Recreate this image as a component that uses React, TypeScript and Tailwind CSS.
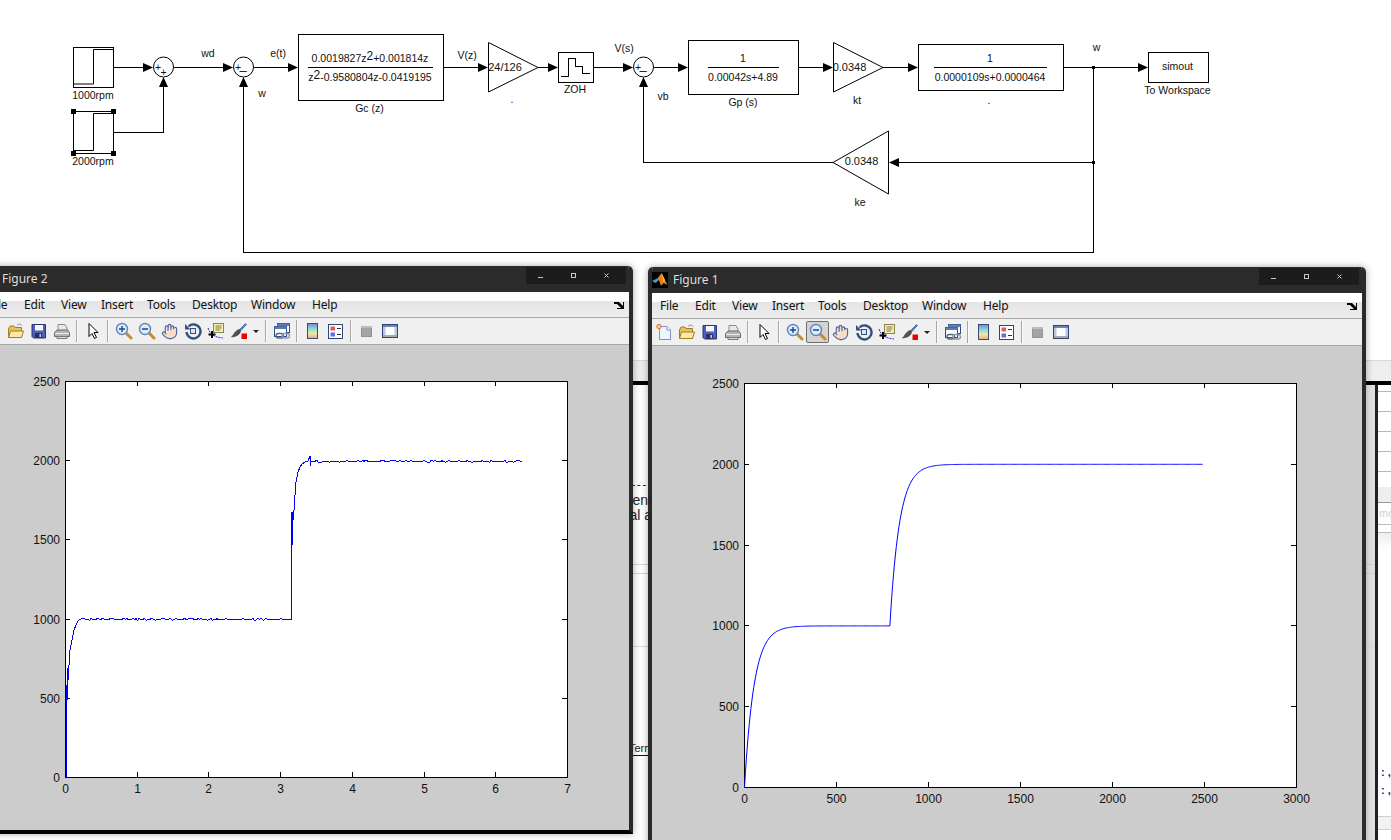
import type { ReactNode } from 'react'
import { Hand } from 'lucide-react'

// ---------- simulink diagram ----------

function ArrowR({ x, y }: { x: number; y: number }) {
  return <polygon points={`${x - 10},${y - 4.5} ${x},${y} ${x - 10},${y + 4.5}`} fill="#000" />
}

function ArrowU({ x, y }: { x: number; y: number }) {
  return <polygon points={`${x - 4.5},${y + 10} ${x},${y} ${x + 4.5},${y + 10}`} fill="#000" />
}

function Label({ x, y, children, size = 10.5 }: { x: number; y: number; children: ReactNode; size?: number }) {
  return (
    <text x={x} y={y} textAnchor="middle" fontSize={size} fill="#111">
      {children}
    </text>
  )
}

function Sum({ x, a, b }: { x: number; a: string; b: string }) {
  return (
    <g>
      <circle cx={x} cy={67} r={10} fill="#fff" stroke="#000" />
      <text x={x - 5.5} y={71} textAnchor="middle" fontSize={10.5} fill="#111">{a}</text>
      <text x={x + (b === '+' ? 0 : -0.5)} y={b === '+' ? 76 : 75} textAnchor="middle" fontSize={b === '+' ? 10.5 : 13} fill="#111">{b}</text>
    </g>
  )
}

function Diagram() {
  const wires = [
    'M113.5 67.5H144',
    'M113.5 132.5H163.5V86',
    'M174 67.5H224',
    'M254 67.5H289',
    'M243.5 86V252.5H1093.5V67',
    'M443.5 67.5H479',
    'M538 67.5H549',
    'M593.5 67.5H624',
    'M654 67.5H679',
    'M643.5 86V162.5H833',
    'M798.5 67.5H824',
    'M883 67.5H909',
    'M1063 67.5H1139',
    'M1093.5 162.5H898',
  ]
  return (
    <svg width={1391} height={266} className="block font-['Liberation_Sans']">
      <g fill="none" stroke="#000">
        {wires.map((d) => (
          <path key={d} d={d} shapeRendering="crispEdges" />
        ))}
        <rect x={73.5} y={47.5} width={40} height={40} shapeRendering="crispEdges" />
        <path d="M74 84H93.5V49.5H113" />
        <rect x={73.5} y={111.5} width={40} height={42} shapeRendering="crispEdges" />
        <path d="M74 150.5H93.5V113.5H113" />
        <rect x={298.5} y={34.5} width={145} height={66} shapeRendering="crispEdges" />
        <path d="M308 67.5H433M708 67.5H779M934 67.5H1047" shapeRendering="crispEdges" />
        <polygon points="488.5,42.5 488.5,92 538,67.5" />
        <rect x={558.5} y={52.5} width={35} height={30} shapeRendering="crispEdges" />
        <path d="M561 76.5H568.5V58.5H575.5V66.5H582.5V73.5H590" shapeRendering="crispEdges" />
        <rect x={688.5} y={40.5} width={110} height={54} shapeRendering="crispEdges" />
        <polygon points="833.5,42.5 833.5,92 883,67.5" />
        <rect x={918.5} y={44.5} width={145} height={46} shapeRendering="crispEdges" />
        <rect x={1148.5} y={52.5} width={60} height={30} shapeRendering="crispEdges" />
        <polygon points="888.5,131 888.5,194 833,162.5" />
      </g>

      {/* selection handles on the second step block */}
      <g fill="#000">
        <rect x={71} y={109} width={5} height={5} />
        <rect x={111} y={109} width={5} height={5} />
        <rect x={71} y={151} width={5} height={5} />
        <rect x={111} y={151} width={5} height={5} />
        <rect x={1092} y={66} width={3} height={3} />
        <rect x={1092} y={161} width={3} height={3} />
      </g>

      <ArrowR x={153} y={67.5} />
      <ArrowU x={163.5} y={77} />
      <ArrowR x={233} y={67.5} />
      <ArrowU x={243.5} y={77} />
      <ArrowR x={298} y={67.5} />
      <ArrowR x={488} y={67.5} />
      <ArrowR x={558} y={67.5} />
      <ArrowR x={633} y={67.5} />
      <ArrowU x={643.5} y={77} />
      <ArrowR x={688} y={67.5} />
      <ArrowR x={833} y={67.5} />
      <ArrowR x={918} y={67.5} />
      <ArrowR x={1148} y={67.5} />
      <polygon points="899,158 889,162.5 899,167" fill="#000" />

      <Sum x={163.5} a="+" b="+" />
      <Sum x={243.5} a="+" b="–" />
      <Sum x={643.5} a="+" b="–" />

      <Label x={93} y={99}>1000rpm</Label>
      <Label x={93} y={165}>2000rpm</Label>
      <Label x={208} y={57}>wd</Label>
      <Label x={278} y={57}>e(t)</Label>
      <Label x={262} y={97}>w</Label>
      <Label x={370} y={62}>
        0.0019827z<tspan fontSize={12} dy={-2}>2</tspan><tspan dy={2}>+0.001814z</tspan>
      </Label>
      <Label x={370} y={81}>
        z<tspan fontSize={12} dy={-2}>2</tspan><tspan dy={2}>-0.9580804z-0.0419195</tspan>
      </Label>
      <Label x={369.5} y={112}>Gc (z)</Label>
      <Label x={467} y={59}>V(z)</Label>
      <Label x={505} y={71} size={11}>24/126</Label>
      <Label x={512} y={103}>.</Label>
      <Label x={575} y={93}>ZOH</Label>
      <Label x={624} y={52}>V(s)</Label>
      <Label x={663} y={100}>vb</Label>
      <Label x={743} y={62}>1</Label>
      <Label x={743} y={81}>0.00042s+4.89</Label>
      <Label x={743} y={106}>Gp (s)</Label>
      <Label x={849.5} y={71} size={11}>0.0348</Label>
      <Label x={857} y={104}>kt</Label>
      <Label x={990} y={62}>1</Label>
      <Label x={990} y={81}>0.0000109s+0.0000464</Label>
      <Label x={989} y={104}>.</Label>
      <Label x={1096.5} y={51}>w</Label>
      <Label x={1177.5} y={70}>simout</Label>
      <Label x={1177.5} y={94}>To Workspace</Label>
      <Label x={861.5} y={165} size={11}>0.0348</Label>
      <Label x={860} y={206}>ke</Label>
    </svg>
  )
}

// ---------- toolbar icons ----------

function Ico({ children }: { children: ReactNode }) {
  return (
    <svg width={18} height={18} viewBox="0 0 18 18" className="block">
      {children}
    </svg>
  )
}

const NewIcon = () => (
  <Ico>
    <path d="M4.5 3.5H12L15.5 7V16.5H4.5Z" fill="#eef6fd" stroke="#7c93c4" />
    <path d="M12 3.5V7H15.5" fill="#fff" stroke="#7c93c4" />
    <circle cx={4} cy={3.5} r={2.2} fill="#fbc89a" stroke="#e0703a" />
  </Ico>
)
const OpenIcon = () => (
  <Ico>
    <path d="M10 3.5C12 1.5 14 2 15 3.5" fill="none" stroke="#7a8ea8" />
    <path d="M1.5 7V15.5H14.5V5.5H8L7 4H3Z" fill="#e8c25c" stroke="#a07c28" />
    <path d="M1.5 15.5L3.5 9H16.5L14.5 15.5Z" fill="#fbe9a4" stroke="#a07c28" />
  </Ico>
)
const SaveIcon = () => (
  <Ico>
    <path d="M2 2.5H15.5V16H3.5L2 14.5Z" fill="#4f5fb8" stroke="#2a3478" />
    <rect x={5} y={3} width={8} height={5.5} fill="#f4f6fb" />
    <rect x={5} y={11} width={7} height={5} fill="#2b2f66" />
    <rect x={9.5} y={12} width={1.5} height={3} fill="#c8cde8" />
  </Ico>
)
const PrintIcon = () => (
  <Ico>
    <path d="M5 9V2.5H12L14 6V9Z" fill="#e8e8e8" stroke="#8a8a8a" />
    <path d="M1.5 10.5L4 8H14.5L16.5 10.5V14.5H1.5Z" fill="#b4b4b4" stroke="#6a6a6a" />
    <path d="M4 14.5V16.5H14V14.5Z" fill="#d8d8d8" stroke="#7a7a7a" />
    <path d="M2 11.5H16" stroke="#ececec" />
  </Ico>
)
const PointerIcon = () => (
  <Ico>
    <path d="M5 1.5V14.5L8 11.5L10.5 16.5L12.5 15.5L10 10.5H14Z" fill="#fff" stroke="#000" />
  </Ico>
)
const Lens = ({ plus }: { plus: boolean }) => (
  <Ico>
    <path d="M10.5 10.5L16 16" stroke="#c98a2c" strokeWidth={3} strokeLinecap="round" />
    <circle cx={7} cy={7} r={5.5} fill="#dcecf8" stroke="#5d86bd" strokeWidth={1.4} />
    <path d={plus ? 'M4 7H10M7 4V10' : 'M4 7H10'} stroke="#24408c" strokeWidth={1.4} />
  </Ico>
)
const HandIcon = () => <Hand size={17} fill="#fbdcc2" stroke="#4a68a8" strokeWidth={1.6} className="block" />
const RotateIcon = () => (
  <Ico>
    <path d="M4.5 4.5A7 7 0 1 1 2.5 10" fill="none" stroke="#35507f" strokeWidth={2.4} />
    <path d="M1 2V7.5H6.5Z" fill="#35507f" />
    <rect x={6.5} y={6.5} width={5} height={5} fill="#dfe5f0" stroke="#35507f" />
  </Ico>
)
const CursorIcon = () => (
  <Ico>
    <rect x={6.5} y={1.5} width={10} height={9} fill="#f6eeb0" stroke="#8a8454" />
    <path d="M8.5 4H14.5M8.5 6H14.5M8.5 8H13" stroke="#7a7a50" />
    <path d="M1 6C3 12 6 15 16 16" fill="none" stroke="#1f2fd8" strokeDasharray="2 1" />
    <path d="M5 9V16M1.5 12.5H8.5" stroke="#000" strokeWidth={2} />
  </Ico>
)
const BrushIcon = () => (
  <Ico>
    <path d="M9 8L15.5 1.5L16.5 2.5L10 9.5Z" fill="#5a78c0" stroke="#34508c" strokeWidth={0.6} />
    <path d="M9 7.5L10.5 9.5C9.5 13 6 14.5 1.5 15C4 13 4 9.5 9 7.5Z" fill="#55554f" stroke="#333" strokeWidth={0.6} />
    <rect x={11.5} y={11.5} width={5.5} height={5.5} fill="#ee0000" />
  </Ico>
)
const LinkIcon = () => (
  <Ico>
    <rect x={4.5} y={1.5} width={12} height={9} fill="#fff" stroke="#2f4c80" />
    <rect x={4.5} y={1.5} width={12} height={2.5} fill="#5c7cb4" />
    <rect x={1.5} y={4.5} width={12} height={10} fill="#fff" stroke="#2f4c80" />
    <rect x={1.5} y={4.5} width={12} height={2.5} fill="#5c7cb4" />
    <rect x={3} y={11.5} width={7.5} height={4.5} rx={2.2} fill="none" stroke="#59677e" strokeWidth={1.4} />
    <rect x={9} y={11.5} width={7.5} height={4.5} rx={2.2} fill="none" stroke="#8a98ae" strokeWidth={1.4} />
  </Ico>
)
const ColorbarIcon = ({ id }: { id: string }) => (
  <svg width={18} height={18} viewBox="0 0 18 18" className="block">
    <defs>
      <linearGradient id={id} x1="0" y1="0" x2="0" y2="1">
        <stop offset="0" stopColor="#7e7ee0" />
        <stop offset="0.35" stopColor="#88dcd0" />
        <stop offset="0.65" stopColor="#e8ecaa" />
        <stop offset="1" stopColor="#f0a878" />
      </linearGradient>
    </defs>
    <rect x={3.5} y={1.5} width={10} height={15} fill={`url(#${id})`} stroke="#3a4a78" />
  </svg>
)
const LegendIcon = () => (
  <Ico>
    <rect x={1.5} y={2.5} width={14} height={14} fill="#fff" stroke="#2f4578" />
    <rect x={3.5} y={4.5} width={4.5} height={4} fill="#e05a5a" />
    <rect x={3.5} y={10.5} width={4.5} height={4} fill="#6c6ce0" />
    <path d="M10 6.5H14M10 12.5H14" stroke="#333" />
  </Ico>
)
const HideIcon = () => (
  <Ico>
    <rect x={3.5} y={4.5} width={10} height={10} fill="#a4a4a4" stroke="#929292" />
    <rect x={3} y={4} width={11} height={2} fill="#bcbcbc" />
  </Ico>
)
const ShowIcon = () => (
  <Ico>
    <rect x={1.5} y={2.5} width={15} height={13} fill="#fff" stroke="#2f4578" />
    <rect x={2} y={3} width={14} height={2} fill="#6a86b8" />
    <rect x={2} y={13} width={14} height={2} fill="#a9a9a9" />
    <rect x={2} y={5} width={2.5} height={8} fill="#b8c8e0" />
    <rect x={13.5} y={5} width={2.5} height={8} fill="#b8c8e0" />
  </Ico>
)

function Btn({ children, active }: { children: ReactNode; active?: boolean }) {
  return (
    <div
      className={`flex h-[22px] w-[23px] items-center justify-center rounded-[2px] ${
        active ? 'border border-[#6e6e6e] bg-[#d4d4d4]' : ''
      }`}
    >
      {children}
    </div>
  )
}

function Sep() {
  return (
    <div className="flex w-[8px] justify-center">
      <div className="h-[22px] w-[2px] border-l border-[#a8a8a8] bg-[#fafafa]" />
    </div>
  )
}

function Toolbar({ gradientId, zoomOutActive }: { gradientId: string; zoomOutActive?: boolean }) {
  return (
    <div className="flex h-[28px] shrink-0 items-center border-t border-b border-t-[#a6a6a6] border-b-[#a6a6a6] bg-[#f0f0f0]">
      <Btn><NewIcon /></Btn>
      <Btn><OpenIcon /></Btn>
      <Btn><SaveIcon /></Btn>
      <Btn><PrintIcon /></Btn>
      <Sep />
      <Btn><PointerIcon /></Btn>
      <Sep />
      <Btn><Lens plus /></Btn>
      <Btn active={zoomOutActive}><Lens plus={false} /></Btn>
      <Btn><HandIcon /></Btn>
      <Btn><RotateIcon /></Btn>
      <Btn><CursorIcon /></Btn>
      <Btn><BrushIcon /></Btn>
      <div className="flex w-[12px] justify-center">
        <div className="h-0 w-0 border-x-[3px] border-t-[3px] border-x-transparent border-t-[#222]" />
      </div>
      <Sep />
      <Btn><LinkIcon /></Btn>
      <Sep />
      <Btn><ColorbarIcon id={gradientId} /></Btn>
      <Btn><LegendIcon /></Btn>
      <Sep />
      <Btn><HideIcon /></Btn>
      <Btn><ShowIcon /></Btn>
    </div>
  )
}

// ---------- figure window ----------

const menu: Array<[string, string]> = [
  ['File', 'w-[35px]'],
  ['Edit', 'w-[37px]'],
  ['View', 'w-[40px]'],
  ['Insert', 'w-[46px]'],
  ['Tools', 'w-[45px]'],
  ['Desktop', 'w-[59px]'],
  ['Window', 'w-[61px]'],
  ['Help', 'w-[40px]'],
]

function MatlabLogo() {
  return (
    <svg width={16} height={16} viewBox="0 0 16 16" className="block bg-black">
      <path d="M0 9L5 6.5L7 8L3.5 11Z" fill="#3fa4cf" />
      <path d="M5 7L9.5 1L13 8L15.5 13L11.5 11L9 14L7 8Z" fill="#e8801e" />
      <path d="M9.5 1L11 9L11.5 11L13 8Z" fill="#f5b63c" />
    </svg>
  )
}

function FigureWindow({
  title,
  frame,
  gradientId,
  zoomOutActive,
  children,
}: {
  title: string
  frame: string
  gradientId: string
  zoomOutActive?: boolean
  children: ReactNode
}) {
  return (
    <div className={`absolute flex flex-col overflow-hidden rounded-t-[5px] border-x-4 border-[#2b2b2b] shadow-[0_0_7px_rgba(0,0,0,0.35)] ${frame}`}>
      <div className="flex h-[26px] shrink-0 items-center bg-[#2b2b2b]">
        <MatlabLogo />
        <span className="ml-[5px] text-[12px] text-[#dedede]">{title}</span>
        <div className="ml-auto mr-[3px] mb-[8px] flex h-[17px] w-[100px] items-center gap-[28px] bg-[#1c1c1c] pl-[12px]">
          <div className="h-[1px] w-[5px] translate-y-[2px] bg-[#c8c8c8]" />
          <div className="h-[5px] w-[5px] border border-[#c8c8c8]" />
          <svg width={5} height={5} viewBox="0 0 5 5" className="block">
            <path d="M0.5 0.5L4.5 4.5M4.5 0.5L0.5 4.5" stroke="#c8c8c8" />
          </svg>
        </div>
      </div>
      <div className="relative flex h-[25px] shrink-0 items-end bg-white pl-[8px] text-[12px] tracking-[-0.2px] text-[#111]">
        <div className="absolute inset-x-0 bottom-0 h-[16px] bg-gradient-to-b from-[#e4e4e4] to-[#eeeeee]" />
        {menu.map(([m, w]) => (
          <span key={m} className={`relative h-[21px] ${w}`}>{m}</span>
        ))}
        <svg width={11} height={9} viewBox="0 0 11 9" className="absolute right-[4px] top-[9px]">
          <path d="M0 1H5L9 5V1H10V8H3V7H7L3 3H0Z" fill="#000" />
        </svg>
      </div>
      <Toolbar gradientId={gradientId} zoomOutActive={zoomOutActive} />
      <div className="min-h-0 flex-1 bg-[#cccccc]">{children}</div>
    </div>
  )
}

// ---------- plots ----------

type Axes = {
  vb: string
  w: number
  h: number
  x0: number
  x1: number
  y0: number
  y1: number
  xLabels: string[]
  line: string
  crisp?: boolean
}

function Plot({ vb, w, h, x0, x1, y0, y1, xLabels, line, crisp }: Axes) {
  const yLabels = ['0', '500', '1000', '1500', '2000', '2500']
  const xs = xLabels.map((_, i) => Math.round(x0 + ((x1 - x0) * i) / (xLabels.length - 1)) + 0.5)
  const ys = yLabels.map((_, i) => Math.round(y1 - ((y1 - y0) * i) / 5) + 0.5)
  return (
    <svg width={w} height={h} viewBox={vb} className="block font-['Liberation_Sans']">
      <rect x={x0 + 0.5} y={y0 + 0.5} width={x1 - x0} height={y1 - y0} fill="#fff" stroke="#000" shapeRendering="crispEdges" />
      <g stroke="#000" shapeRendering="crispEdges">
        {xs.map((x) => (
          <path key={x} d={`M${x} ${y0}V${y0 + 5}M${x} ${y1}V${y1 - 5}`} />
        ))}
        {ys.map((y) => (
          <path key={y} d={`M${x0} ${y}H${x0 + 5}M${x1} ${y}H${x1 - 5}`} />
        ))}
      </g>
      <path d={line} fill="none" stroke="#0000ff" shapeRendering={crisp ? 'crispEdges' : undefined} />
      <g fontSize={12} fill="#111">
        {xLabels.map((t, i) => (
          <text key={t} x={xs[i]} y={y1 + 15.5} textAnchor="middle">{t}</text>
        ))}
        {yLabels.map((t, i) => (
          <text key={t} x={x0 - 5} y={ys[i] + 4} textAnchor="end">{t}</text>
        ))}
      </g>
    </svg>
  )
}

const toPath = (pts: number[][]) => 'M' + pts.map(([x, y]) => `${x} ${y}`).join('L')

const jitter = (i: number) => {
  const v = Math.sin(i * 12.9898) * 43758.5453
  const f = v - Math.floor(v)
  return f < 0.22 ? -1 : f > 0.78 ? 1 : 0
}

// measured run: noisy with a controller spike after each step
function noisyLine() {
  const pts: number[][] = [
    [66, 777], [66, 740], [67, 690], [66, 735], [67, 685], [66, 730], [67, 695], [66, 720], [68, 668], [67, 700], [68, 680],
    [69, 665], [70, 650], [71, 645], [72, 640], [73, 635], [74, 630], [76, 625], [78, 621], [80, 619],
  ]
  for (let x = 81; x <= 291; x++) pts.push([x, 619 + jitter(x)])
  pts.push(
    [291, 560], [292, 545], [292, 512], [291, 560], [292, 530], [293, 520], [294, 510], [295, 495],
    [296, 482], [298, 472], [300, 467], [302, 464], [305, 462], [308, 461], [310, 456], [310, 466], [311, 461],
  )
  for (let x = 312; x <= 522; x++) pts.push([x, 461 + jitter(x)])
  return toPath(pts)
}

// simulated run: two first-order steps
function smoothLine() {
  const pts: number[][] = []
  for (let t = 0; t <= 2490; t += 5) {
    let v = 1000 * (1 - Math.exp(-t / 52))
    if (t > 790) v = 1000 + 1000 * (1 - Math.exp(-((t - 790) / 52)))
    pts.push([+(744.5 + (t * 552) / 3000).toFixed(2), +(787.5 - (v * 404) / 2500).toFixed(2)])
  }
  return toPath(pts)
}

// ---------- window behind the figures ----------

function BackWindow() {
  return (
    <div className="absolute left-[620px] top-[360px] h-[480px] w-[771px] overflow-hidden bg-white font-['Liberation_Sans'] text-[#222]">
      <div className="h-[21px] border-t border-[#d8d8d8] bg-[#eeeeee]" />
      <div className="h-[4px] bg-black" />
      <div className="flex h-[455px]">
        <div className="w-[755px] shrink-0 bg-gradient-to-r from-white from-[97%] to-[#dddddd]">
          <div className="ml-[12px] mt-[100px] w-[30px] border-t border-dashed border-[#333]" />
          <div className="mt-[8px] h-[30px]" />
          <div className="mt-[40px] h-[10px] border-y border-[#d4d4d4]" />
          <div className="mt-[72px] border-t border-[#dcdcdc]" />
          <div className="mt-[95px] w-[32px] border-b border-[#111] pl-[9px] text-[11px] leading-[13px]">Term</div>
        </div>
        <div className="flex-1 border-l-[3px] border-[#222]">
          <div className="h-[7px] border-b border-[#b8b8b8]" />
          <div className="h-[95px] bg-[repeating-linear-gradient(to_bottom,#ffffff_0,#ffffff_19px,#b8b8b8_19px,#b8b8b8_20px)]" />
          <div className="h-[16px] border-b border-[#999] bg-[#eeeeee]" />
          <div className="h-[22px] border-b border-[#bbb] pl-[1px] text-[11px] leading-[20px] text-[#d0d0d0]">mo</div>
          <div className="mt-[7px] h-[18px] border-t border-[#bbb] bg-gradient-to-b from-[#eeeeee] to-white" />
          <div className="mt-[213px] pl-[3px] text-[11px] font-bold leading-[18px] text-[#001a80]">: ,</div>
          <div className="pl-[3px] text-[11px] font-bold leading-[18px] text-[#001a80]">: ,</div>
          <div className="mt-[17px] h-[14px] border-y border-[#d0d0d0] bg-[#f2f2f2]" />
        </div>
      </div>
    </div>
  )
}

export default function App() {
  return (
    <div className="relative h-[840px] w-[1391px] overflow-hidden bg-white font-['Noto_Sans',sans-serif]">
      <Diagram />
      <BackWindow />
      <FigureWindow title="Figure 2" gradientId="cb2" frame="left-[-23px] top-[266px] h-[568px] w-[656px] border-b-4 border-b-black">
        <Plot
          vb="-19 345 648 485"
          w={648}
          h={485}
          x0={65}
          x1={567}
          y0={381}
          y1={777}
          xLabels={['0', '1', '2', '3', '4', '5', '6', '7']}
          line={noisyLine()}
          crisp
        />
      </FigureWindow>
      <FigureWindow title="Figure 1" gradientId="cb1" frame="left-[648px] top-[267px] h-[600px] w-[718px]" zoomOutActive>
        <Plot
          vb="652 346 710 521"
          w={710}
          h={521}
          x0={744}
          x1={1296}
          y0={383}
          y1={787}
          xLabels={['0', '500', '1000', '1500', '2000', '2500', '3000']}
          line={smoothLine()}
        />
      </FigureWindow>
      {/* page text showing through the glass border between the two figures */}
      <div className="absolute left-[631px] top-[493px] w-[21px] overflow-hidden font-['Liberation_Sans'] text-[14px] leading-[15px] text-[#222]">
        <div className="flex justify-end whitespace-nowrap">ent</div>
        <div className="flex justify-end whitespace-nowrap">ual a</div>
      </div>
    </div>
  )
}
